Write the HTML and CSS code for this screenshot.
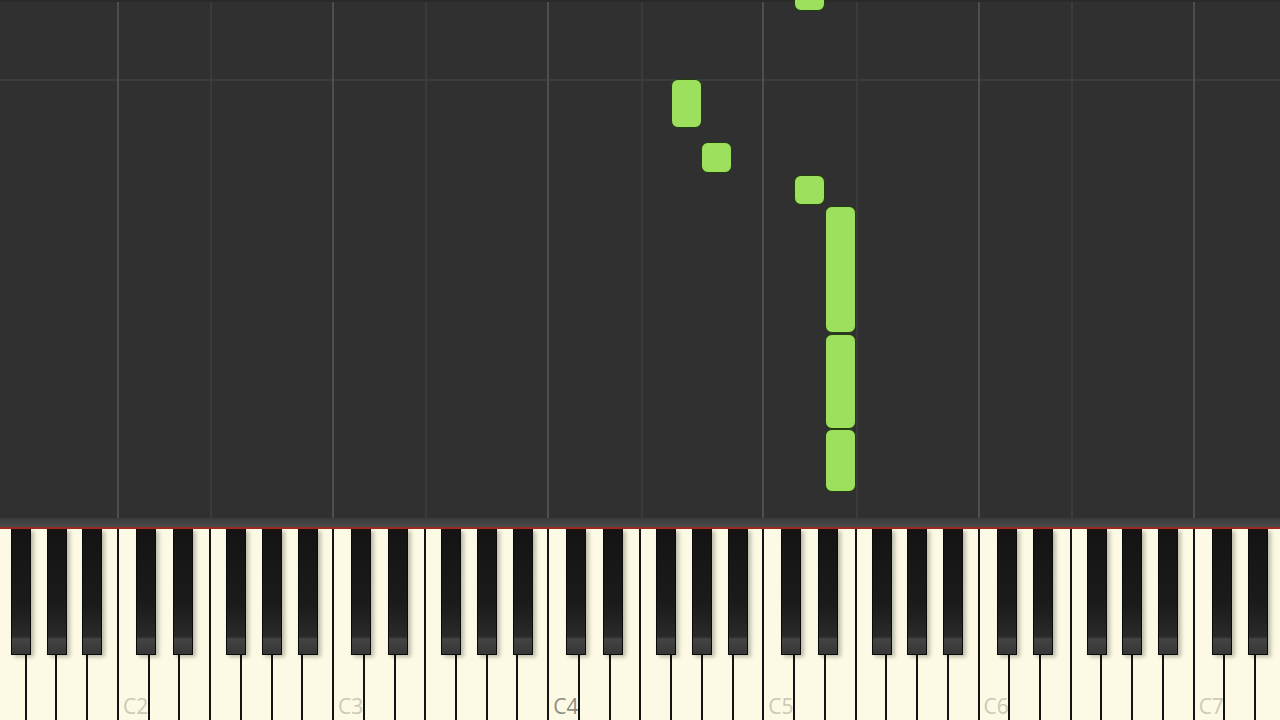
FILE: index.html
```html
<!DOCTYPE html>
<html lang="en">
<head>
    <meta charset="UTF-8" />
    <title>Piano Roll</title>
    <link rel="stylesheet" href="styles.css">
</head>
<body>
    <div class="roll">
        <div class="grid" id="grid"></div>
        <div class="note" style="left:794px; top:-8px; height:19px;"></div>
        <div class="note" style="left:671px; top:79px; height:49px;"></div>
        <div class="note" style="left:701px; top:142px; height:31px;"></div>
        <div class="note" style="left:794px; top:175px; height:30px;"></div>
        <div class="note" style="left:825px; top:206px; height:127px;"></div>
        <div class="note" style="left:825px; top:334px; height:95px;"></div>
        <div class="note" style="left:825px; top:429px; height:63px;"></div>
    </div>
    <div class="bar"></div>
    <div class="keyboard">
        <div class="keys" id="keys"></div>
    </div>
    <script src="script.js"></script>
</body>
</html>
```

FILE: styles.css
```css
body {
    margin: 0;
    width: 1280px;
    height: 720px;
    overflow: hidden;
    background: #303030;
    font-family: "Open Sans", Arial, sans-serif;
    display: flex;
    flex-direction: column;
}

.roll {
    position: relative;
    height: 518px;
    overflow: hidden;
    background: #303030;
}

.grid {
    display: flex;
    margin-left: -98.3px;
    height: 100%;
    border-top: 2px solid #2a2a2a;
    box-sizing: border-box;
    background: linear-gradient(#303030 77px, #3c3c3c 77px, #3c3c3c 79px, #303030 79px);
}

.octave {
    flex: 0 0 215.2px;
    display: grid;
    grid-template-columns: 3fr 4fr;
    border-left: 2px solid #4e4e4e;
    box-sizing: border-box;
}

.octave .upper {
    border-left: 2px solid #3b3b3b;
}

.note {
    position: absolute;
    width: 31px;
    background: #9de05e;
    border: 1.5px solid #223d0e;
    border-radius: 7px;
    box-sizing: border-box;
}

.bar {
    height: 9px;
    background: linear-gradient(#3a3a3a, #4c4c4c);
    border-bottom: 2px solid #9a2a22;
}

.keyboard {
    flex: 1;
    overflow: hidden;
    background: #fcfae4;
}

.keys {
    display: flex;
    height: 100%;
    margin-left: -6px;
}

.white {
    position: relative;
    flex: 0 0 30.743px;
    height: 100%;
    box-sizing: border-box;
    border-left: 2px solid #141414;
    background: #fcfae4;
}

.white .label {
    position: absolute;
    left: 4px;
    bottom: 0;
    font-size: 21px;
    color: #cbc9b7;
}

.white .label.middle {
    color: #8e8c80;
}

.black {
    position: absolute;
    top: 0;
    width: 20px;
    height: 126px;
    z-index: 2;
    box-sizing: border-box;
    border: 1px solid #0a0a0a;
    border-top: none;
    background: linear-gradient(#1e1210 0, #141414 4px, #1b1b1b 60%, #2a2a2a 86%, #444 88%, #363636 100%);
    box-shadow: 3px 2px 4px rgba(0, 0, 0, 0.25);
}

.black.cs { left: 17px; }
.black.ds { left: 23px; }
.black.fs { left: 15px; }
.black.gs { left: 20px; }
.black.as { left: 25px; }
```

FILE: script.js
```js
// grid: one column per octave, starting at C1 (partly off screen)
const grid = document.getElementById('grid');
for (let i = 0; i < 8; i++) {
    const oct = document.createElement('div');
    oct.className = 'octave';
    oct.innerHTML = '<div class="lower"></div><div class="upper"></div>';
    grid.appendChild(oct);
}

// keyboard from F1 to F7
const names = ['C', 'D', 'E', 'F', 'G', 'A', 'B'];
const sharps = { C: 'cs', D: 'ds', F: 'fs', G: 'gs', A: 'as' };
const keys = document.getElementById('keys');
let octave = 1;
let idx = 3;
for (let k = 0; k < 43; k++) {
    const name = names[idx];
    const key = document.createElement('div');
    key.className = 'white';
    if (name === 'C') {
        const label = document.createElement('span');
        label.className = 'label' + (octave === 4 ? ' middle' : '');
        label.textContent = 'C' + octave;
        key.appendChild(label);
    }
    if (sharps[name]) {
        const black = document.createElement('div');
        black.className = 'black ' + sharps[name];
        key.appendChild(black);
    }
    keys.appendChild(key);
    idx++;
    if (idx === 7) {
        idx = 0;
        octave++;
    }
}
```
